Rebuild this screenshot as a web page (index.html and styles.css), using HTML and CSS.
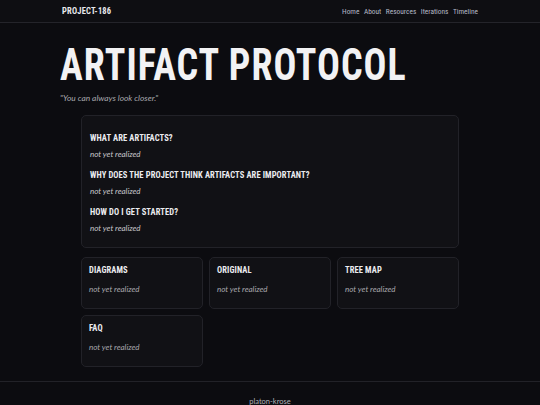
FILE: index.html
```html
<!DOCTYPE html>
<html lang="en">
<head>
<meta charset="utf-8">
<title>Artifact Protocol</title>
<link rel="stylesheet" href="styles.css">
</head>
<body>
<header class="topbar">
  <div class="topbar-inner">
    <div class="brand">PROJECT-186</div>
    <nav class="nav">
      <a href="#">Home</a>
      <a href="#">About</a>
      <a href="#">Resources</a>
      <a href="#">Iterations</a>
      <a href="#">Timeline</a>
    </nav>
  </div>
</header>
<main class="main">
  <h1 class="title">ARTIFACT PROTOCOL</h1>
  <p class="quote">"You can always look closer."</p>
  <section class="panel">
    <div class="qa">
      <h2 class="heading">WHAT ARE ARTIFACTS?</h2>
      <p class="muted">not yet realized</p>
    </div>
    <div class="qa">
      <h2 class="heading">WHY DOES THE PROJECT THINK ARTIFACTS ARE IMPORTANT?</h2>
      <p class="muted">not yet realized</p>
    </div>
    <div class="qa">
      <h2 class="heading">HOW DO I GET STARTED?</h2>
      <p class="muted">not yet realized</p>
    </div>
  </section>
  <section class="grid">
    <div class="card"><h3 class="heading">DIAGRAMS</h3><p class="muted">not yet realized</p></div>
    <div class="card"><h3 class="heading">ORIGINAL</h3><p class="muted">not yet realized</p></div>
    <div class="card"><h3 class="heading">TREE MAP</h3><p class="muted">not yet realized</p></div>
    <div class="card"><h3 class="heading">FAQ</h3><p class="muted">not yet realized</p></div>
  </section>
</main>
<footer class="footer">platon-krose</footer>
</body>
</html>
```
FILE: styles.css
```css
* { box-sizing: border-box; }
html, body { margin: 0; padding: 0; }
body {
  background: #0c0c10;
  color: #e6e6e8;
  font-family: "Lato", "Open Sans", sans-serif;
}
.topbar {
  background: #0e0e12;
  border-bottom: 1px solid #24242a;
  height: 23px;
}
.topbar-inner {
  width: 420px;
  margin: 0 auto;
  height: 22px;
  display: flex;
  align-items: center;
  justify-content: space-between;
}
.brand {
  font-family: "Roboto Condensed", "Roboto", sans-serif;
  font-weight: 700;
  font-size: 8.5px;
  letter-spacing: 0.2px;
  color: #e8e8ec;
  padding-left: 2px;
}
.nav { display: flex; gap: 4.5px; padding-right: 2px; }
.nav a {
  font-family: "Roboto Condensed", "Roboto", sans-serif;
  font-size: 7.4px;
  color: #b4b8c6;
  text-decoration: none;
}
.main {
  width: 420px;
  margin: 0 auto;
  padding-top: 22px;
  padding-bottom: 14px;
}
.title {
  margin: 0;
  font-family: "Roboto Condensed", "Roboto", sans-serif;
  font-weight: 700;
  font-size: 38px;
  line-height: 44px;
  letter-spacing: 1px;
  color: #f2f2f4;
  white-space: nowrap;
  transform: scaleY(1.18);
  transform-origin: 0 35px;
}
.quote {
  margin: 4px 0 0 0;
  font-style: italic;
  font-size: 8.4px;
  line-height: 10px;
  color: #a8a8ae;
}
.panel {
  margin: 12px 21px 0 21px;
  background: #111115;
  border: 1px solid #222228;
  border-radius: 5px;
  padding: 17px 8px 14px 8px;
  display: flex;
  flex-direction: column;
  gap: 11px;
}
.heading {
  margin: 0;
  font-family: "Roboto Condensed", "Roboto", sans-serif;
  font-weight: 700;
  font-size: 8.5px;
  line-height: 10px;
  letter-spacing: 0.1px;
  color: #ececf0;
}
.muted {
  margin: 6px 0 0 0;
  font-style: italic;
  font-size: 8px;
  line-height: 10px;
  color: #c8c8cc;
}
.grid {
  margin: 9px 21px 0 21px;
  display: grid;
  grid-template-columns: repeat(3, 1fr);
  gap: 6px;
}
.card {
  background: #111115;
  border: 1px solid #222228;
  border-radius: 5px;
  padding: 7px 7px 0 7px;
  height: 52px;
}
.card .muted { margin-top: 9px; color: #a8a8ae; }
.footer {
  border-top: 1px solid #222228;
  text-align: center;
  padding-top: 15px;
  font-size: 7.5px;
  line-height: 10px;
  color: #b0b0b6;
  font-family: "Lato", sans-serif;
  height: 40px;
}
```
